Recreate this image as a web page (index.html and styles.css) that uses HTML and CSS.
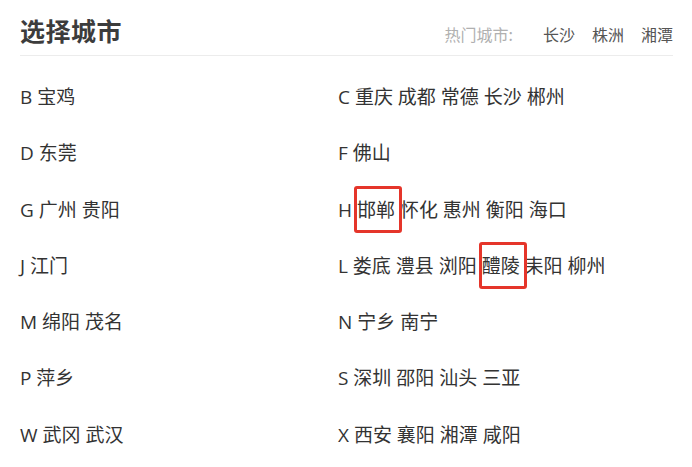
FILE: index.html
```html
<!DOCTYPE html>
<html lang="zh-CN">
<head>
<meta charset="utf-8">
<title>选择城市</title>
<link rel="stylesheet" href="styles.css">
</head>
<body>
<div class="page">
  <div class="header">
    <h1 class="title">选择城市</h1>
    <div class="hot">
      <span class="hot-label">热门城市:</span>
      <span class="hot-city">长沙</span>
      <span class="hot-city">株洲</span>
      <span class="hot-city">湘潭</span>
    </div>
  </div>
  <div class="list">
    <div class="row">B 宝鸡</div>
    <div class="row">C 重庆 成都 常德 长沙 郴州</div>
    <div class="row">D 东莞</div>
    <div class="row">F 佛山</div>
    <div class="row">G 广州 贵阳</div>
    <div class="row">H <span class="mark">邯郸</span> 怀化 惠州 衡阳 海口</div>
    <div class="row">J 江门</div>
    <div class="row">L 娄底 澧县 浏阳 <span class="mark">醴陵</span> 耒阳 柳州</div>
    <div class="row">M 绵阳 茂名</div>
    <div class="row">N 宁乡 南宁</div>
    <div class="row">P 萍乡</div>
    <div class="row">S 深圳 邵阳 汕头 三亚</div>
    <div class="row">W 武冈 武汉</div>
    <div class="row">X 西安 襄阳 湘潭 咸阳</div>
  </div>
</div>
</body>
</html>
```
FILE: styles.css
```css
html, body {
  margin: 0;
  padding: 0;
  background: #ffffff;
}
body {
  font-family: "Open Sans", "Noto Sans CJK SC", sans-serif;
  color: #333333;
}
.page {
  width: 653px;
  padding-left: 20px;
}
.header {
  display: flex;
  justify-content: space-between;
  align-items: center;
  height: 56px;
  border-bottom: 1px solid #ececec;
  box-sizing: border-box;
}
.title {
  margin: 0;
  font-family: "Noto Sans CJK SC", sans-serif;
  font-size: 25px;
  font-weight: 700;
  color: #3c3c3c;
  letter-spacing: 0.5px;
  line-height: 30px;
  margin-top: 4px;
}
.hot {
  display: flex;
  align-items: center;
  font-family: "Noto Sans CJK SC", sans-serif;
  font-size: 16px;
  margin-top: 12px;
}
.hot-label {
  color: #b0b0b0;
  margin-right: 30px;
}
.hot-city {
  color: #555555;
  margin-left: 17px;
}
.hot-label + .hot-city {
  margin-left: 0;
}
.list {
  display: grid;
  grid-template-columns: 318px 1fr;
  padding-top: 13px;
}
.row {
  font-size: 19px;
  line-height: 56.3px;
  height: 56.3px;
  color: #333333;
  white-space: nowrap;
}
.mark {
  position: relative;
}
.mark::after {
  content: "";
  position: absolute;
  left: -3px;
  right: -7px;
  top: -11px;
  bottom: -10px;
  border: 3px solid #e5352a;
  border-radius: 3px;
}
```
